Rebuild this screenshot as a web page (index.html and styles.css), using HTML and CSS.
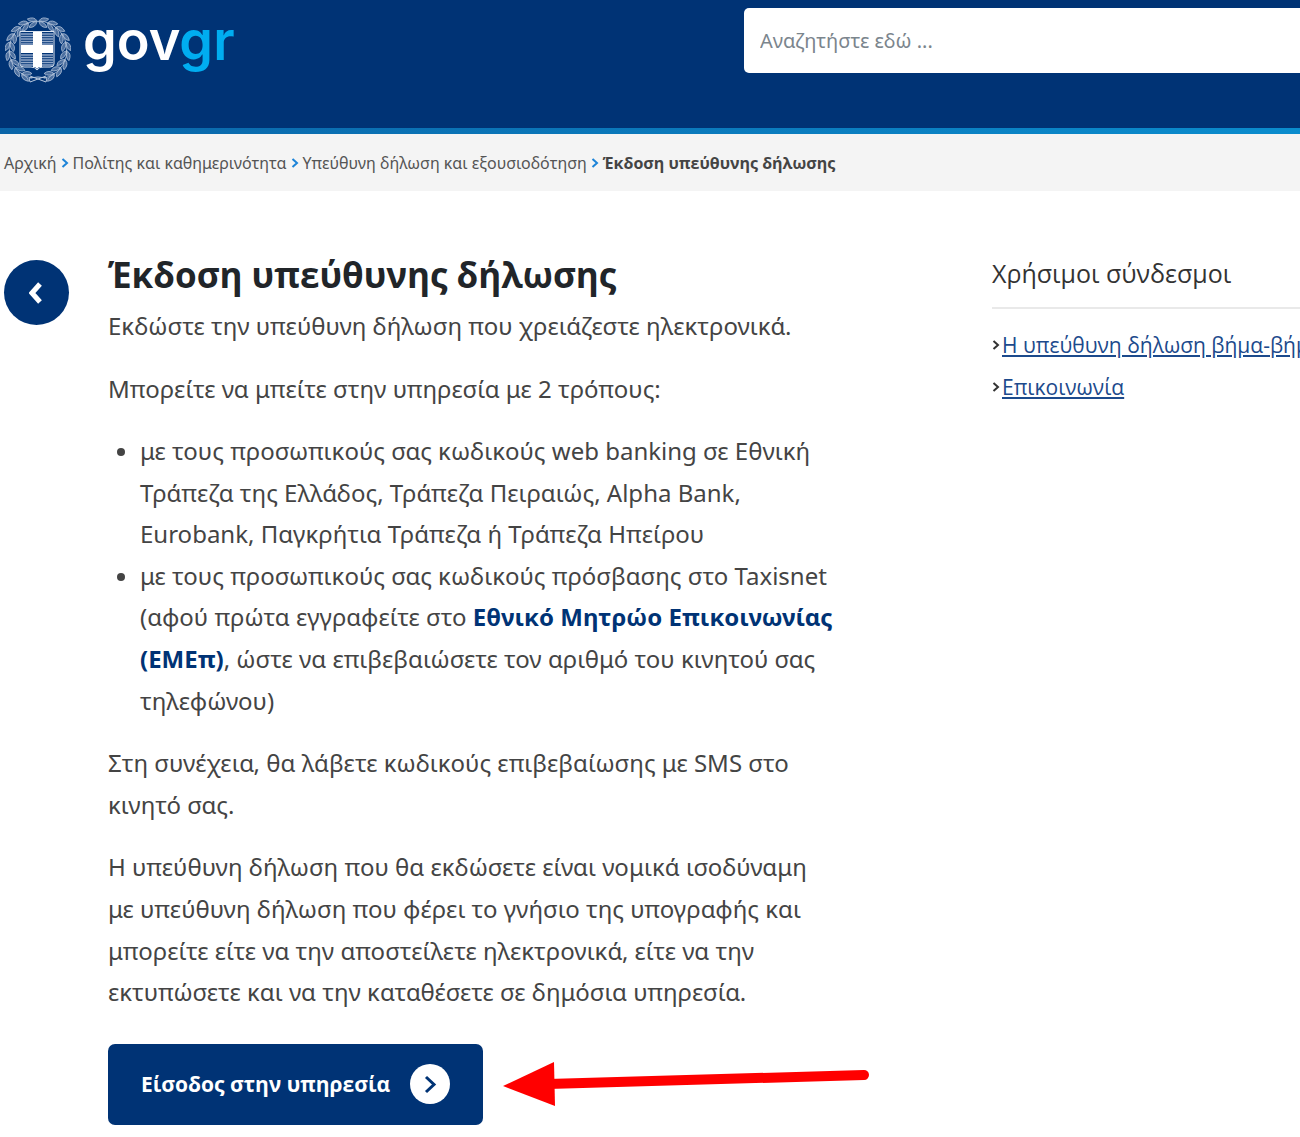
FILE: index.html
```
<!DOCTYPE html>
<html lang="el">
<head>
    <meta charset="UTF-8">
    <meta name="viewport" content="width=device-width, initial-scale=1.0">
    <title>Έκδοση υπεύθυνης δήλωσης</title>

    <link rel="stylesheet" href="styles.css">

</head>
<body>

    <header class="header">
        <a class="logo" href="/">
            <svg class="emblem" viewBox="0 0 66 68" aria-hidden="true">
                <defs>
                    <!-- one piece of the laurel branch, at the top of the ring -->
                    <g id="leaf" fill="#4d70a0" stroke="#b8c8de" stroke-width="0.7">
                        <path d="M27 6Q33 4 39 6" fill="none" />
                        <path d="M28 5Q30 0 37 1.500Q35 6 28 5Z" />
                        <path d="M28 6Q34 5 37 10Q31 12 28 6Z" />
                    </g>
                    <g id="branch">
                        <use href="#leaf" transform="rotate(12 33 34)" />
                        <use href="#leaf" transform="rotate(30 33 34)" />
                        <use href="#leaf" transform="rotate(48 33 34)" />
                        <use href="#leaf" transform="rotate(66 33 34)" />
                        <use href="#leaf" transform="rotate(84 33 34)" />
                        <use href="#leaf" transform="rotate(102 33 34)" />
                        <use href="#leaf" transform="rotate(120 33 34)" />
                        <use href="#leaf" transform="rotate(138 33 34)" />
                        <use href="#leaf" transform="rotate(156 33 34)" />
                        <path d="M25 60L41 66L42 62L33 61" fill="none" stroke="#b8c8de" />
                    </g>
                </defs>
                <use href="#branch" />
                <use href="#branch" transform="matrix(-1 0 0 1 66 0)" />
                <path d="M15 15.500H49V48Q49 51 45 51H38Q34 51 32 54Q30 51 26 51H19Q15 51 15 48Z" fill="#003375" stroke="#dbe4f0" />
                <path d="M16 18H48M16 20.500H48M16 23H48M16 25.500H48M16 28H48M16 39H48M16 41.500H48M16 44H48M16 46.500H48M16 49H48" stroke="#91a8c9" stroke-width="1.300" />
                <path d="M28 16H37V29H48V37H37V51H34L32 53L30 51H28V37H16V29H28Z" fill="#fff" />
            </svg>
            <span class="logo-text">gov<span class="logo-gr">gr</span></span>
        </a>
        <form class="search">
            <input type="search" aria-label="Αναζήτηση" placeholder="Αναζητήστε εδώ ...">
        </form>
    </header>

    <nav class="breadcrumbs">
        <a href="#">Αρχική</a>
        <svg viewBox="0 0 8 12"><path d="M1.500 2L6 6L1.500 10" /></svg>
        <a href="#">Πολίτης και καθημερινότητα</a>
        <svg viewBox="0 0 8 12"><path d="M1.500 2L6 6L1.500 10" /></svg>
        <a href="#">Υπεύθυνη δήλωση και εξουσιοδότηση</a>
        <svg viewBox="0 0 8 12"><path d="M1.500 2L6 6L1.500 10" /></svg>
        <strong>Έκδοση υπεύθυνης δήλωσης</strong>
    </nav>

    <div class="page">
        <a class="back" href="#" aria-label="Πίσω">
            <svg viewBox="0 0 16 24"><path d="M11 3L3 12L11 21" /></svg>
        </a>

        <main class="content">
            <h1>Έκδοση υπεύθυνης δήλωσης</h1>
            <p>Εκδώστε την υπεύθυνη δήλωση που χρειάζεστε ηλεκτρονικά.</p>
            <p>Μπορείτε να μπείτε στην υπηρεσία με 2 τρόπους:</p>
            <ul>
                <li>με τους προσωπικούς σας κωδικούς web banking σε Εθνική Τράπεζα της Ελλάδος, Τράπεζα Πειραιώς, Alpha Bank, Eurobank, Παγκρήτια Τράπεζα ή Τράπεζα Ηπείρου</li>
                <li>με τους προσωπικούς σας κωδικούς πρόσβασης στο Taxisnet (αφού πρώτα εγγραφείτε στο <a href="#">Εθνικό Μητρώο Επικοινωνίας (ΕΜΕπ)</a>, ώστε να επιβεβαιώσετε τον αριθμό του κινητού σας τηλεφώνου)</li>
            </ul>
            <p>Στη συνέχεια, θα λάβετε κωδικούς επιβεβαίωσης με SMS στο κινητό σας.</p>
            <p>Η υπεύθυνη δήλωση που θα εκδώσετε είναι νομικά ισοδύναμη με υπεύθυνη δήλωση που φέρει το γνήσιο της υπογραφής και μπορείτε είτε να την αποστείλετε ηλεκτρονικά, είτε να την εκτυπώσετε και να την καταθέσετε σε δημόσια υπηρεσία.</p>

            <div class="actions">
                <button class="enter" type="button">
                    Είσοδος στην υπηρεσία
                    <svg viewBox="0 0 40 40">
                        <circle cx="20" cy="20" r="20" fill="#fff" />
                        <path d="M16 13L24 20.500L16 28" fill="none" stroke="#003375" stroke-width="3" />
                    </svg>
                </button>
                <svg class="arrow" viewBox="0 0 366 44" aria-hidden="true">
                    <path d="M45 22L361 13" stroke="#f00" stroke-width="10" stroke-linecap="round" />
                    <path d="M0 24L51 0L52 44Z" fill="#f00" />
                </svg>
            </div>
        </main>

        <aside class="links">
            <h2>Χρήσιμοι σύνδεσμοι</h2>
            <ul>
                <li><svg viewBox="0 0 8 12"><path d="M1.500 2L6 6L1.500 10" /></svg><a href="#">Η υπεύθυνη δήλωση βήμα-βήμα</a></li>
                <li><svg viewBox="0 0 8 12"><path d="M1.500 2L6 6L1.500 10" /></svg><a href="#">Επικοινωνία</a></li>
            </ul>
        </aside>
    </div>

</body>
</html>
```
FILE: styles.css
```
* {
    box-sizing: border-box;
}

body {
    margin: 0;
    background-color: #ffffff;
    color: #444444;
    font-family: "Open Sans", "Noto Sans", sans-serif;
    font-size: 24px;
    overflow-x: hidden;
}

.header {
    display: flex;
    justify-content: space-between;
    align-items: flex-start;
    height: 134px;
    padding: 8px 0 0 5px;
    background-color: #003375;
    border-bottom: 6px solid;
    border-image: linear-gradient(90deg, #0b65a8, #0a8ccd) 1;
}

.logo {
    display: flex;
    gap: 12px;
    text-decoration: none;
}

.emblem {
    width: 66px;
    height: 68px;
    margin-top: 8px;
}

.logo-text {
    color: #ffffff;
    font-family: Inter, sans-serif;
    font-size: 54px;
    font-weight: 600;
    line-height: 66px;
}

.logo-gr {
    color: #00adf0;
}

.search {
    width: 556px;
}

.search input {
    display: block;
    width: 100%;
    height: 65px;
    padding: 0 16px;
    border: none;
    border-radius: 5px 0 0 5px;
    background-color: #ffffff;
    font-family: "Noto Sans", sans-serif;
    font-size: 20px;
}

.search input::placeholder {
    color: #7b858d;
}

.breadcrumbs {
    display: flex;
    align-items: center;
    gap: 4px;
    height: 57px;
    padding: 0 4px;
    background-color: #f4f4f4;
    font-size: 16px;
    white-space: nowrap;
}

.breadcrumbs a {
    color: #555555;
    font-family: "Noto Sans", sans-serif;
    text-decoration: none;
}

.breadcrumbs svg {
    width: 8px;
    height: 12px;
    fill: none;
    stroke: #1d84d8;
    stroke-width: 2;
}

.page {
    display: flex;
    align-items: flex-start;
    padding: 60px 0 0 4px;
}

.back {
    display: flex;
    flex: none;
    align-items: center;
    justify-content: center;
    width: 65px;
    height: 65px;
    margin: 9px 39px 0 0;
    border-radius: 50%;
    background-color: #003375;
}

.back svg {
    width: 16px;
    height: 24px;
    fill: none;
    stroke: #ffffff;
    stroke-width: 5;
}

.content {
    flex: 1;
    margin-right: 156px;
}

h1 {
    margin: 0;
    color: #212529;
    font-size: 35px;
    line-height: 48px;
}

.content p,
.content ul {
    margin: 0 0 21px;
    font-family: "Noto Sans", sans-serif;
    line-height: 1.733;
}

.content h1 + p {
    margin-top: 6px;
}

.content ul {
    padding-left: 32px;
}

.content li::marker {
    font-size: 22px;
}

.content li a {
    color: #003375;
    font-weight: bold;
    text-decoration: none;
}

.actions {
    display: flex;
    align-items: center;
    gap: 20px;
    padding-top: 10px;
}

.enter {
    display: flex;
    flex: none;
    align-items: center;
    gap: 20px;
    height: 81px;
    padding: 0 33px;
    border: none;
    border-radius: 7px;
    background-color: #003375;
    color: #ffffff;
    font-family: inherit;
    font-size: 21px;
    font-weight: bold;
    cursor: pointer;
}

.enter svg {
    width: 40px;
    height: 40px;
}

.arrow {
    flex: none;
    width: 366px;
    height: 44px;
}

.links {
    flex: none;
    width: 308px;
}

.links h2 {
    margin: 0 0 15px;
    padding-bottom: 12px;
    border-bottom: 2px solid #e9e9e9;
    color: #333333;
    font-size: 25px;
    font-weight: normal;
    line-height: 44px;
}

.links ul {
    margin: 0;
    padding: 0;
    list-style: none;
    font-size: 21px;
    line-height: 42px;
    white-space: nowrap;
}

.links li {
    display: flex;
    align-items: center;
    gap: 2px;
}

.links a {
    color: #1c4a8c;
}

.links svg {
    flex: none;
    width: 8px;
    height: 12px;
    fill: none;
    stroke: #333333;
    stroke-width: 2;
}
```
